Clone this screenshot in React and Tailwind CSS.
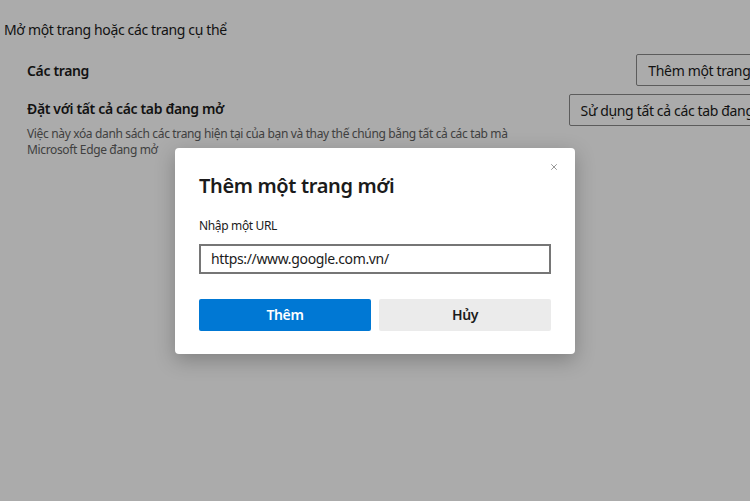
import { X } from 'lucide-react';

export default function App() {
  return (
    <div
      className="relative h-[501px] w-[750px] overflow-hidden bg-white tracking-[-0.35px] text-[#1b1b1b]"
      style={{ fontFamily: '"Noto Sans", "Open Sans", sans-serif' }}
    >
      {/* Settings page behind */}
      <div className="w-[790px] pt-[20px]">
        <div className="pl-[4px] text-[14px] leading-[20px]">Mở một trang hoặc các trang cụ thể</div>

        <div className="mt-[14px] flex items-center justify-between pl-[27px]">
          <div className="text-[14px] font-semibold">Các trang</div>
          <button className="h-[32px] rounded-[2px] border border-[#8a8a8a] px-[11px] text-[14px]">
            Thêm một trang mới
          </button>
        </div>

        <div className="mt-[8px] flex items-start justify-between pl-[27px]">
          <div className="pt-[5px]">
            <div className="text-[14px] font-semibold leading-[20px]">Đặt với tất cả các tab đang mở</div>
            <div className="mt-[7px] w-[520px] text-[12px] leading-[16px] text-[#616161]">
              Việc này xóa danh sách các trang hiện tại của bạn và thay thế chúng bằng tất cả các tab mà Microsoft Edge
              đang mở
            </div>
          </div>
          <button className="h-[32px] rounded-[2px] border border-[#8a8a8a] px-[11px] text-[14px]">
            Sử dụng tất cả các tab đang mở
          </button>
        </div>
      </div>

      {/* Overlay + dialog */}
      <div className="absolute inset-0 flex items-center justify-center bg-black/[0.33]">
        <div className="relative w-[400px] rounded-[4px] bg-white px-[24px] pb-[23px] pt-[24px] shadow-[0_6px_20px_rgba(0,0,0,0.25)]">
          <button className="absolute right-[16px] top-[14px] text-[#5a5a5a]">
            <X className="h-[10px] w-[10px]" strokeWidth={1.5} />
          </button>
          <div className="text-[20px] font-semibold leading-[28px] text-[#1b1b1b]">Thêm một trang mới</div>
          <div className="mt-[18px] text-[12px] leading-[16px] text-[#1b1b1b]">Nhập một URL</div>
          <div className="mt-[10px] flex h-[30px] items-center border-2 border-[#767676] px-[10px] text-[14px] text-[#1b1b1b]">
            https://www.google.com.vn/
          </div>
          <div className="mt-[25px] flex gap-[8px]">
            <button className="h-[32px] flex-1 rounded-[2px] bg-[#0078d4] text-[14px] font-semibold text-white">
              Thêm
            </button>
            <button className="h-[32px] flex-1 rounded-[2px] bg-[#ebebeb] text-[14px] font-semibold text-[#1b1b1b]">
              Hủy
            </button>
          </div>
        </div>
      </div>
    </div>
  );
}
